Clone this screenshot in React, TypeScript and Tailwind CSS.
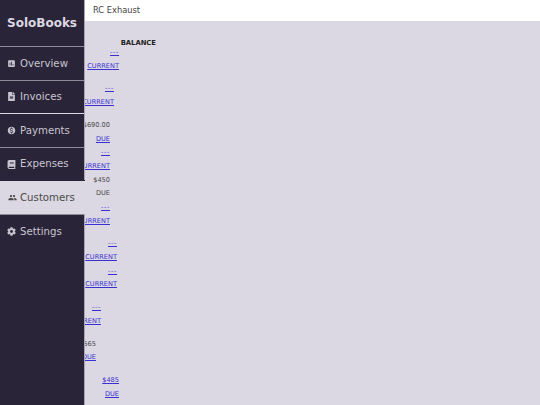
import { FaBook, FaCog, FaFileAlt } from 'react-icons/fa'
import { MdAssessment, MdMonetizationOn, MdPeople } from 'react-icons/md'

const navItems = [
  { label: 'Overview', icon: MdAssessment, line: 'border-[#8f8b99]', iconBox: 'w-[9px] mr-[4px]' },
  { label: 'Invoices', icon: FaFileAlt, line: 'border-[#8f8b99]', iconBox: 'w-[9px] mr-[4px]' },
  { label: 'Payments', icon: MdMonetizationOn, line: 'border-[#dbd8e3]', iconBox: 'w-[9px] mr-[4px]' },
  { label: 'Expenses', icon: FaBook, line: 'border-[#8f8b99]', iconBox: 'w-[9px] mr-[4px]' },
  { label: 'Customers', icon: MdPeople, line: 'border-[#2a2438]', iconBox: 'w-[11px] mr-[2px]', active: true },
  { label: 'Settings', icon: FaCog, line: 'border-[#8f8b99]', iconBox: 'w-[9px] mr-[4px]' },
]

// width = right edge of the cell measured from the main column
const rows = [
  { amount: '---', status: 'CURRENT', width: 'w-[34px]', gap: 'mt-0', amountLink: true, statusLink: true },
  { amount: '---', status: 'CURRENT', width: 'w-[29px]', gap: 'mt-[9.17px]', amountLink: true, statusLink: true },
  { amount: '$690.00', status: 'DUE', width: 'w-[25px]', gap: 'mt-[9.17px]', amountLink: false, statusLink: true },
  { amount: '---', status: 'CURRENT', width: 'w-[25px]', gap: 'mt-0', amountLink: true, statusLink: true },
  { amount: '$450', status: 'DUE', width: 'w-[25px]', gap: 'mt-0', amountLink: false, statusLink: false },
  { amount: '---', status: 'CURRENT', width: 'w-[25px]', gap: 'mt-0', amountLink: true, statusLink: true },
  { amount: '---', status: 'CURRENT', width: 'w-[32px]', gap: 'mt-[9.17px]', amountLink: true, statusLink: true },
  { amount: '---', status: 'CURRENT', width: 'w-[32px]', gap: 'mt-0', amountLink: true, statusLink: true },
  { amount: '---', status: 'CURRENT', width: 'w-[16px]', gap: 'mt-[9.17px]', amountLink: true, statusLink: true },
  { amount: '$565', status: 'DUE', width: 'w-[11px]', gap: 'mt-[9.17px]', amountLink: false, statusLink: true },
  { amount: '$485', status: 'DUE', width: 'w-[34px]', gap: 'mt-[9.17px]', amountLink: true, statusLink: true },
]

function Cell({ text, link }: { text: string; link: boolean }) {
  return (
    <div className="flex justify-end h-[13.67px] leading-[13.67px] whitespace-nowrap">
      {link ? (
        <a href="#" className={`text-[#3a30d0] underline ${text === '---' ? 'tracking-[0.6px]' : ''}`}>{text}</a>
      ) : (
        <span className="text-[#4a4a4a]">{text}</span>
      )}
    </div>
  )
}

export default function App() {
  return (
    <div className="flex h-[405px] w-[540px] overflow-hidden bg-[#dbd8e3] font-['DejaVu_Sans',sans-serif]">
      <aside className="w-[85px] shrink-0 bg-[#2a2438] border-r border-[#a9a6b3] flex flex-col">
        <div className="h-[46px] flex items-center pl-[7px] text-[12px] font-bold text-[#dbd8e3]">
          SoloBooks
        </div>
        {navItems.map(({ label, icon: Icon, line, iconBox, active }) => (
          <div
            key={label}
            className={`h-[33.6px] flex items-center pl-[7px] text-[10.2px] border-t ${line} ${
              active ? 'bg-[#dbd8e3] text-[#4a4a4a] -mr-px' : 'text-[#c8c5d0]'
            }`}
          >
            <Icon className={`${iconBox} h-[9px] shrink-0`} />
            {label}
          </div>
        ))}
      </aside>
      <main className="flex-1 min-w-0 flex flex-col overflow-hidden">
        <header className="h-[21px] shrink-0 bg-white flex items-center pl-[8px] text-[8.3px] text-[#444]">RC Exhaust</header>
        <div className="text-[6.6px] flex flex-col">
          <div className="w-[71px] flex justify-end text-[6.8px] font-bold text-[#222] mt-[16px] h-[9px] leading-[13px] whitespace-nowrap">BALANCE</div>
          {rows.map((row, i) => (
            <div key={i} className={`${row.width} ${row.gap} flex flex-col`}>
              <Cell text={row.amount} link={row.amountLink} />
              <Cell text={row.status} link={row.statusLink} />
            </div>
          ))}
        </div>
      </main>
    </div>
  )
}
